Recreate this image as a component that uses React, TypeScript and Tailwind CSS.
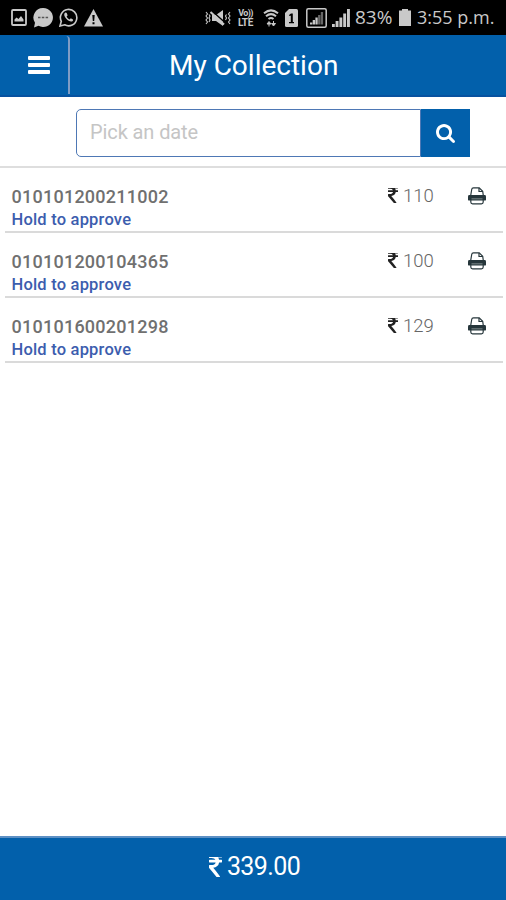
/* ─── Icons ─── */
const BarsIcon = () => (
  <svg className="h-[18px] w-[22px]" viewBox="0 0 22 18" fill="currentColor">
    <rect x="0" y="0" width="22" height="4" rx="1" />
    <rect x="0" y="7" width="22" height="4" rx="1" />
    <rect x="0" y="14" width="22" height="4" rx="1" />
  </svg>
);

const SearchIcon = () => (
  <svg className="size-[19px]" viewBox="0 128 1664 1664" fill="currentColor">
    <path d="M1152 832q0-185-131.5-316.5t-316.5-131.5-316.5 131.5-131.5 316.5 131.5 316.5 316.5 131.5 316.5-131.5 131.5-316.5zM1664 1664q0 52-38 90t-90 38q-54 0-90-38l-343-342q-179 124-399 124-143 0-273.5-55.5t-225-150-150-225-55.5-273.5 55.5-273.5 150-225 225-150 273.5-55.5 273.5 55.5 225 150 150 225 55.5 273.5q0 220-124 399l343 343q37 37 37 90z" />
  </svg>
);

const PrintIcon = () => (
  <svg className="h-[18px] w-[18px]" viewBox="0 0 18 18" fill="none" stroke="currentColor">
    <path d="M2.700 8.500l1-6q.2-1.700 1.800-1.700h5.700l3.500 3.400.6 4.300" strokeWidth="1.200" />
    <path d="M11 1v3.500h3.700" strokeWidth="1.200" />
    <path d="M1.400 8h15.200q1.400 0 1.400 1.400v3.400q0 .6-.6.600H.6q-.6 0-.6-.6V9.400Q0 8 1.400 8z" fill="currentColor" stroke="none" />
    <path d="M3.500 12h11" stroke="#9aa5a7" strokeWidth="1" />
    <path d="M2.800 13v2q0 1.800 1.800 1.800h8.800q1.800 0 1.800-1.800v-2z" fill="#fff" strokeWidth="1.200" />
  </svg>
);

const RupeeIcon = ({ className }: { className: string }) => (
  <svg className={className} viewBox="0 256 898 1280" preserveAspectRatio="none" fill="currentColor">
    <path d="M898 470v102q0 14-9 23t-23 9h-168q-23 144-129 234t-276 110q167 178 459 536 14 16 4 34-8 18-29 18h-195q-16 0-25-12-306-367-498-571-9-9-9-22v-127q0-13 9.500-22.500t22.500-9.500h112q132 0 212.500-43t102.500-125h-427q-14 0-23-9t-9-23v-102q0-14 9-23t23-9h413q-57-113-268-113h-145q-13 0-22.500-9.500t-9.500-22.500v-133q0-14 9-23t23-9h832q14 0 23 9t9 23v102q0 14-9 23t-23 9h-233q47 61 64 144h171q14 0 23 9t9 23z" />
  </svg>
);

const PictureIcon = () => (
  <svg className="h-[17px] w-4" viewBox="0 0 16 17" fill="none">
    <rect x="1" y="1" width="14" height="15" rx="1" stroke="currentColor" strokeWidth="1.8" />
    <path d="M3.500 12.500v-2l2-2 2 1.500 2.500-3 2.500 3.500v2z" fill="currentColor" />
  </svg>
);

const ChatIcon = () => (
  <svg className="size-5" viewBox="0 0 20 20">
    <path d="M10.300 0a9.700 9.500 0 1 1-4.800 17.800L1 19.500l1-4.800A9.700 9.500 0 0 1 10.300 0z" fill="currentColor" />
    <path d="M5 8.800h2.500v1.500H5zM8.800 8.800h2.500v1.500H8.800zM12.600 8.800h2.500v1.500h-2.500z" fill="#555" />
  </svg>
);

const WhatsappIcon = () => (
  <svg className="size-[19px]" viewBox="0 0 19 19" fill="none">
    <path d="M1 18l1.300-4.700A8.200 8.200 0 1 1 5.700 16.800z" stroke="currentColor" strokeWidth="1.600" />
    <path d="M6.500 4.500c-2 1-1.500 3.600.8 6.300 2.500 2.800 5.300 3.600 6.600 1.900.6-1 .2-1.500-2.100-2.500l-1.200 1.200c-1.300-.5-2.400-1.600-3-2.900l1-1.100c-.5-1.900-1-3.100-2.100-2.900z" fill="currentColor" />
  </svg>
);

const WarningIcon = () => (
  <svg className="h-[18px] w-[19px]" viewBox="0 0 19 18">
    <path d="M9.500 0L19 17.500H0z" fill="currentColor" />
    <path d="M8.300 6h2.400l-.5 6H8.800zM8.500 13.300h2v2h-2z" fill="#000" />
  </svg>
);

const MuteIcon = () => (
  <svg className="h-[18px] w-[26px]" viewBox="0 0 26 18" fill="none" stroke="currentColor">
    <path d="M7 6h4l7-5v16l-7-5H7z" fill="currentColor" stroke="none" />
    <path d="M6.500 1.500l14 12.500" stroke="#000" strokeWidth="1.500" />
    <path d="M5.500 3l13.500 12.500" strokeWidth="2" />
    <path d="M1 3l1.500 2L1 7l1.500 2L1 11l1.500 2L1 15M4 5.500l1 1.500-1 2 1 2-1 2M25 3l-1.500 2L25 7l-1.500 2L25 11l-1.500 2 1.500 2M21.500 5.500L20.500 7l1 2-1 2" strokeWidth="1.100" />
  </svg>
);

const WifiIcon = () => (
  <svg className="h-[18px] w-4" viewBox="0 0 16 18" fill="none" stroke="currentColor" strokeWidth="2">
    <path d="M1 4.200Q8-1.500 15 4.200M3 7.300Q8 3 13 7.300M5.500 10Q8 8 10.500 10" />
    <path d="M4 15l2-2.500L8 15zM6 15v2.500M8.500 14.500h4L10.500 17zM10.500 15v-3" strokeWidth="1" fill="currentColor" />
  </svg>
);

const SimIcon = () => (
  <svg className="h-[18px] w-[13px]" viewBox="0 0 13 18">
    <path d="M4 0h7.500Q13 0 13 1.500v15q0 1.500-1.500 1.500h-10Q0 18 0 16.500V4z" fill="currentColor" />
    <path d="M4 6l2-1.500h1.800V13H9v1.300H4V13h1.800V6.800H4z" fill="#000" />
  </svg>
);

const BoxedSignalIcon = () => (
  <svg className="h-5 w-[21px]" viewBox="0 0 21 20">
    <rect x=".8" y=".8" width="19.400" height="18.400" rx="1.500" fill="none" stroke="currentColor" strokeWidth="1.500" />
    <path d="M4 14.500h2.300v2H4zM6.700 12H9v4.500H6.700zM9.400 9.500h2.300v7H9.400z" fill="currentColor" />
    <path d="M12.100 7h2.300v9.500h-2.300zM14.800 4h2.300v12.500h-2.300z" fill="#666" />
  </svg>
);

const SignalIcon = () => (
  <svg className="h-[18px] w-[18px]" viewBox="0 0 18 18" fill="currentColor">
    <path d="M0 15h2.800v3H0zM3.600 12h2.900v6H3.600zM7.400 8.500h2.900V18H7.400zM11.200 4.500h2.900V18h-2.900zM15 0h2.900v18H15z" />
  </svg>
);

const BatteryIcon = () => (
  <svg className="h-[17px] w-3" viewBox="0 0 12 17" fill="currentColor">
    <path d="M3 0h6v1.500h3V17H0V1.500h3z" />
  </svg>
);

const collections = [
  { id: "010101200211002", amount: 110 },
  { id: "010101200104365", amount: 100 },
  { id: "010101600201298", amount: 129 },
];

const StatusBar = () => (
  <div className="flex h-[35px] shrink-0 items-center bg-black pl-[11px] text-[#c9c9c9]">
    <div className="flex items-center gap-[6px]">
      <PictureIcon />
      <ChatIcon />
      <WhatsappIcon />
      <WarningIcon />
    </div>
    <div className="ml-[102px] flex items-center">
      <MuteIcon />
      <div className="ml-[6px] flex w-[17px] flex-col items-center font-['Roboto'] font-bold leading-[9px]">
        <span className="text-[9px] tracking-[-0.7px]">Vo))</span>
        <span className="text-[10px] tracking-[-0.3px]">LTE</span>
      </div>
      <div className="ml-[9px] flex items-center">
        <WifiIcon />
        <div className="ml-[6px] flex items-center gap-2">
          <SimIcon />
          <BoxedSignalIcon />
        </div>
        <div className="ml-[5px]">
          <SignalIcon />
        </div>
      </div>
    </div>
    <span className="ml-[5px] w-[40px] whitespace-nowrap font-['Open_Sans',sans-serif] text-[19px] font-medium">
      83%
    </span>
    <div className="ml-[4px]">
      <BatteryIcon />
    </div>
    <span className="ml-[6px] whitespace-nowrap font-['Open_Sans',sans-serif] text-[18px] font-medium">
      3:55 p.m.
    </span>
  </div>
);

export default function App() {
  return (
    <div className="flex h-[900px] w-[506px] flex-col overflow-hidden bg-white font-['Roboto',sans-serif]">
      <StatusBar />

      {/* Header */}
      <header className="flex h-[62px] shrink-0 items-center border-b-2 border-[#0752a0] bg-[#0260ab] text-white">
        <button className="flex h-[58px] w-[70px] items-center rounded-tr-sm border-r-2 border-[#7e9cc5] pl-7" aria-label="Menu">
          <BarsIcon />
        </button>
        <h1 className="ml-[99px] pt-[2px] text-[28px] leading-none">My Collection</h1>
      </header>

      {/* Date search */}
      <div className="flex h-[71px] shrink-0 border-b-2 border-[#dedede] pt-3 pl-[76px]">
        <div className="flex h-12 w-[345px] items-center rounded-l-[5px] border-[1.5px] border-[#4e78b5] pl-[13px] text-[20px] text-[#c5c5c5]">
          <span className="-mt-[3px] tracking-[-0.1px]">Pick an date</span>
        </div>
        <button className="flex h-12 w-[49px] items-center justify-center bg-[#0260ab] text-white" aria-label="Search">
          <SearchIcon />
        </button>
      </div>

      {/* Collections */}
      <ul className="flex-1 pr-[3px] pl-[5px]">
        {collections.map((item) => (
          <li key={item.id} className="flex h-[65px] border-b-2 border-[#dadada] pl-[6.5px]">
            <div className="w-[376.5px] pt-[17px] font-medium">
              <p className="text-[18px] leading-6 tracking-[0.25px] text-[#707070]">{item.id}</p>
              <p className="text-[16.500px] leading-[22px] tracking-[0.2px] text-[#3c5dae]">Hold to approve</p>
            </div>
            <div className="flex h-[58px] w-[80px] items-center">
              <RupeeIcon className="mb-[3px] h-[15px] w-[10px] text-[#222]" />
              <span className="ml-[5px] text-[18.500px] font-light text-[#666]">{item.amount}</span>
            </div>
            <button className="flex h-[56px] items-center text-[#26363b]" aria-label="Print">
              <PrintIcon />
            </button>
          </li>
        ))}
      </ul>

      {/* Total */}
      <footer className="flex h-[64px] shrink-0 items-center justify-center gap-[5px] border-t-2 border-[#5d90c4] bg-[#0260ab] pb-[4px] pl-[3px] text-white">
        <RupeeIcon className="h-5 w-[13px]" />
        <span className="text-[25px] tracking-[-0.6px]">339.00</span>
      </footer>
    </div>
  );
}
